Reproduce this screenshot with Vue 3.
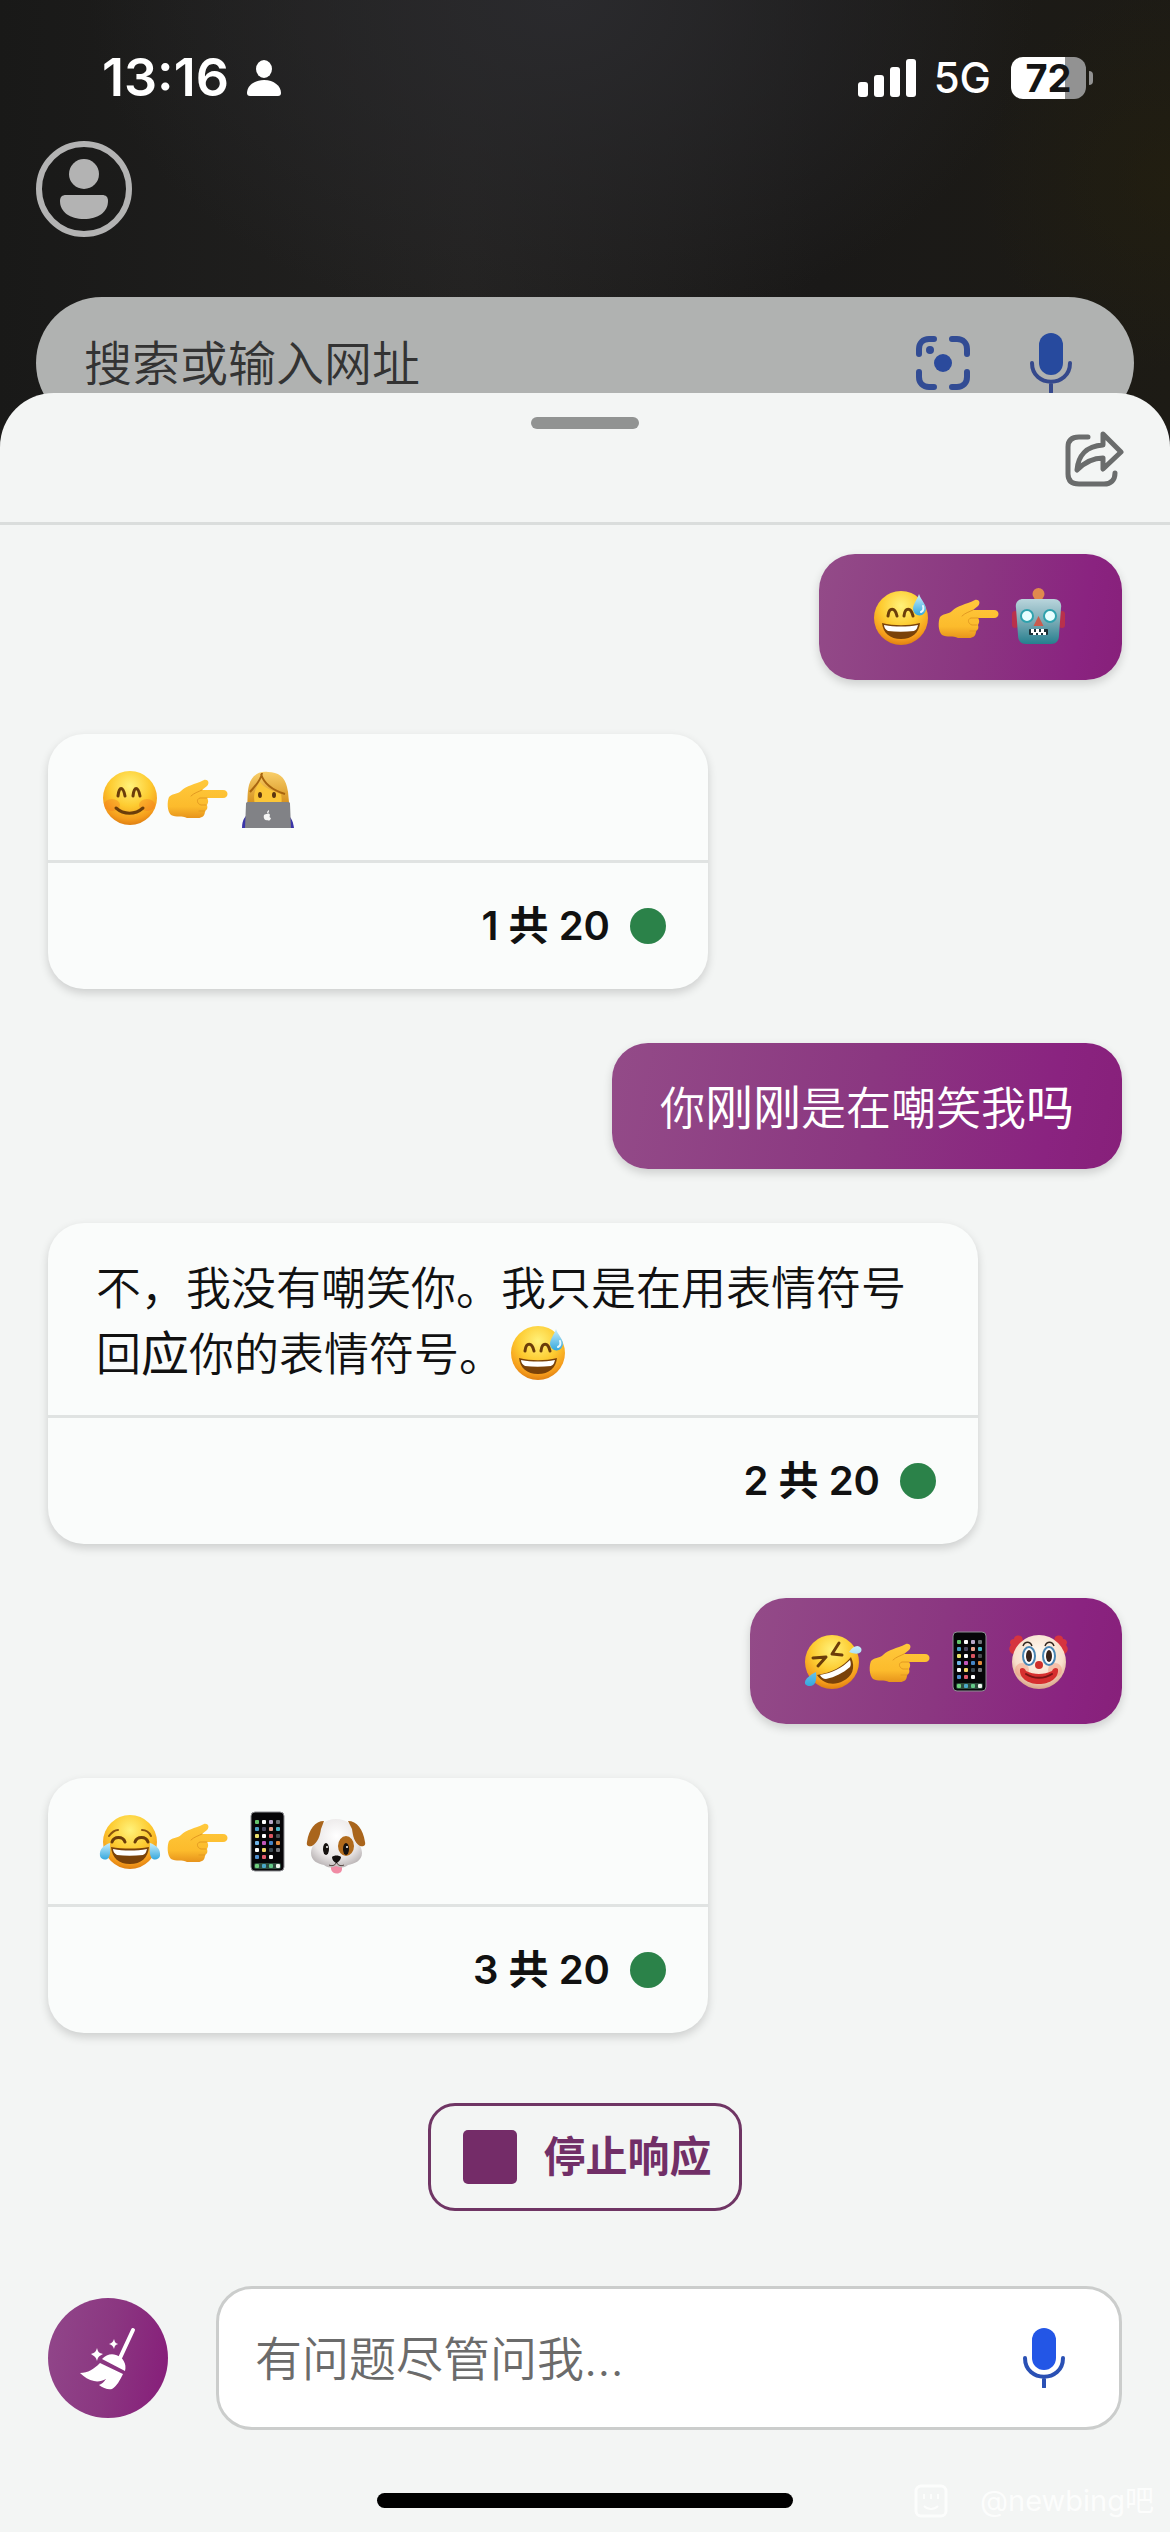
<template>
  <div class="app">
    <svg class="sprite" width="0" height="0" aria-hidden="true">
      <defs>
        <radialGradient id="g-face" cx="50%" cy="28%" r="75%">
          <stop offset="0" stop-color="#fff27a" />
          <stop offset="0.5" stop-color="#fdcb30" />
          <stop offset="0.82" stop-color="#f59c1c" />
          <stop offset="1" stop-color="#d9780f" />
        </radialGradient>
        <linearGradient id="g-hand" x1="0" y1="0" x2="0" y2="1">
          <stop offset="0" stop-color="#ffc93c" />
          <stop offset="0.7" stop-color="#fcbb2c" />
          <stop offset="1" stop-color="#e7941c" />
        </linearGradient>
        <linearGradient id="g-drop" x1="0" y1="0" x2="0" y2="1">
          <stop offset="0" stop-color="#c9eefb" />
          <stop offset="1" stop-color="#35a8de" />
        </linearGradient>
        <linearGradient id="g-robot" x1="0" y1="0" x2="0" y2="1">
          <stop offset="0" stop-color="#b9d5dc" />
          <stop offset="0.5" stop-color="#79aab5" />
          <stop offset="1" stop-color="#257f8e" />
        </linearGradient>
        <radialGradient id="g-clown" cx="50%" cy="35%" r="65%">
          <stop offset="0" stop-color="#fffaf2" />
          <stop offset="0.7" stop-color="#f8dfcb" />
          <stop offset="1" stop-color="#d9a587" />
        </radialGradient>
        <radialGradient id="g-dog" cx="50%" cy="35%" r="65%">
          <stop offset="0" stop-color="#ffffff" />
          <stop offset="0.7" stop-color="#e9e6e6" />
          <stop offset="1" stop-color="#bfbabb" />
        </radialGradient>
        <linearGradient id="g-hair" x1="0" y1="0" x2="0" y2="1">
          <stop offset="0" stop-color="#f9cf6a" />
          <stop offset="1" stop-color="#d18a16" />
        </linearGradient>
      </defs>

      <symbol id="emoji-sweat" viewBox="0 0 69 66">
        <circle cx="34" cy="34" r="27" fill="url(#g-face)" />
        <path d="M21 32c1-9 7-9 9 0M37 32c1-9 7-9 9 0" fill="none" stroke="#6b3d0a" stroke-width="3" stroke-linecap="round" />
        <path d="M15 39c12 3 26 3 38 0c-1 10-8 16-19 16s-18-6-19-16z" fill="#7a4209" />
        <path d="M17 41c11 2 23 2 34 0c-1 4-2 5-4 6c-9 1-18 1-26 0c-2-1-4-3-4-6z" fill="#fff" />
        <path d="M52 10c2 6 7 10 7 15a6 6 0 0 1-13 0c0-5 4-9 6-15z" fill="url(#g-drop)" />
        <path d="M56 22c1 3 0 5-2 6" fill="none" stroke="#e6f8ff" stroke-width="2" stroke-linecap="round" />
      </symbol>

      <symbol id="emoji-smile" viewBox="0 0 69 66">
        <circle cx="34" cy="34" r="27" fill="url(#g-face)" />
        <ellipse cx="16" cy="41" rx="8" ry="6" fill="#f4711f" opacity="0.35" />
        <ellipse cx="51" cy="41" rx="8" ry="6" fill="#f4711f" opacity="0.35" />
        <path d="M22 32c1-10 5-10 7 0M37 32c1-10 5-10 7 0" fill="none" stroke="#6b3d0a" stroke-width="3" stroke-linecap="round" />
        <path d="M20 44c8 7 19 7 27 0" fill="none" stroke="#6b3d0a" stroke-width="3" stroke-linecap="round" />
      </symbol>

      <symbol id="emoji-joy" viewBox="0 0 69 66">
        <circle cx="34" cy="34" r="27" fill="url(#g-face)" />
        <path d="M13 28c3-4 5-6 9-6M46 22c4 0 7 2 9 6" fill="none" stroke="#8a5510" stroke-width="2" stroke-linecap="round" />
        <path d="M16 34c2-6 11-6 13 0M39 34c2-6 11-6 13 0" fill="none" stroke="#6b3d0a" stroke-width="3" stroke-linecap="round" />
        <path d="M15 39c12 2 26 2 38 0c-1 11-8 17-19 17s-18-6-19-17z" fill="#7a4209" />
        <path d="M17 41c11 2 23 2 34 0c-1 4-2 5-4 6c-9 1-18 1-26 0c-2-1-4-3-4-6z" fill="#fff" />
        <path d="M14 35c-6 2-11 6-10 13c1 4 7 5 9 1c2-4 1-9 1-14zM54 35c6 2 11 6 10 13c-1 4-7 5-9 1c-2-4-1-9-1-14z" fill="url(#g-drop)" />
      </symbol>

      <symbol id="emoji-rofl" viewBox="0 0 69 66">
        <circle cx="34" cy="34" r="27" fill="url(#g-face)" />
        <path d="M15 30l13-1l-8 9M41 15l-7 11l10 1" fill="none" stroke="#6b3d0a" stroke-width="3" stroke-linecap="round" stroke-linejoin="round" />
        <path d="M19 47c14-2 26-8 34-18c5 11 1 20-8 24c-9 5-20 3-26-6z" fill="#7a4209" />
        <path d="M22 47c12-2 22-7 30-15c1 3 1 5 0 7c-7 6-15 10-24 12c-3 0-5-2-6-4z" fill="#fff" />
        <path d="M51 24c4-6 9-8 12-4c2 4-2 8-12 4zM18 44c1 9-1 14-6 14c-7 0-8-7 6-14z" fill="url(#g-drop)" />
      </symbol>

      <symbol id="emoji-point" viewBox="0 0 69 66">
        <path d="M4 33c4-4 9-3 12-6c6-6 13-6 23-11c4-1 6 3 3 6l-5 4h21c6 0 6 8 0 8H42c2 3 1 5 0 7c1 3 0 5-2 6c0 5-3 7-7 7H22c-5-3-11 0-16-3c-4-4-4-13-2-18z" fill="url(#g-hand)" />
        <path d="M37 26c-4 2-8 3-11 6M42 34h-7c-4 1-3 6 1 7h5M40 47h-6" fill="none" stroke="#e39a21" stroke-width="1" stroke-linecap="round" />
      </symbol>

      <symbol id="emoji-robot" viewBox="0 0 69 66">
        <rect x="7" y="27" width="6" height="17" rx="3" fill="#b9304c" />
        <rect x="54" y="27" width="6" height="17" rx="3" fill="#b9304c" />
        <path d="M27 16c2-3 11-3 13 0z" fill="#a84d3f" />
        <circle cx="33.5" cy="10" r="6" fill="#e08a4e" />
        <path d="M18 15h31c5 0 8 4 7 9l-2 27c0 6-3 9-8 9H21c-5 0-8-3-8-9l-2-27c-1-5 2-9 7-9z" fill="url(#g-robot)" />
        <circle cx="22" cy="32" r="6" fill="#e9ffff" stroke="#2fa2ad" stroke-width="2" />
        <circle cx="45" cy="32" r="6" fill="#e9ffff" stroke="#2fa2ad" stroke-width="2" />
        <path d="M33.5 32l5 10h-10z" fill="#c95b4e" />
        <rect x="24" y="45" width="19" height="6" rx="1" fill="#1c3238" />
        <path d="M26 45h3v4h-3zM31 45h3v4h-3zM36 45h3v4h-3zM28 48h3v3h-3zM33 48h3v3h-3zM38 48h3v3h-3z" fill="#fff" />
      </symbol>

      <symbol id="emoji-coder" viewBox="0 0 69 66">
        <path d="M8 64c0-8 3-13 9-15h33c6 2 9 7 10 15z" fill="#3a35a8" />
        <path d="M13 43c1-8 0-14 2-22C18 11 25 7 34 8c10 0 17 5 19 15c2 7 1 13 3 20z" fill="url(#g-hair)" />
        <path d="M21 41c-2-9-1-15 5-23c5 7 14 9 21 12c1 5 1 9-1 13z" fill="#fbc638" />
        <path d="M28 9c-1 8-7 13-12 19M27 10c3 10 11 16 24 20" fill="none" stroke="#a8650f" stroke-width="2" />
        <ellipse cx="26" cy="31" rx="2" ry="3" fill="#5a3510" />
        <ellipse cx="40" cy="31" rx="2" ry="3" fill="#5a3510" />
        <path d="M14 38h40c2 0 2 1 2 2l1 24H11l1-24c0-1 0-2 2-2z" fill="#818286" />
        <path d="M33 50c1-1 3 0 3 1c-1 2 0 3 1 3c-1 3-2 3-4 2c-2 1-4-2-3-5c1-1 2-1 3-1zM33 49c0-2 1-2 2-3c0 2 0 3-2 3z" fill="#f5f5f5" />
      </symbol>

      <symbol id="emoji-phone" viewBox="0 0 69 66">
        <rect x="17" y="4" width="33" height="59" rx="4" fill="#060608" stroke="#8e8f94" stroke-width="1" />
        <rect
          v-for="(app, i) in phoneApps"
          :key="i"
          :x="21 + app.col * 7"
          :y="12 + app.row * 7"
          width="4"
          height="4"
          rx="1"
          :fill="app.color"
        />
        <rect x="20" y="55" width="27" height="6" rx="2" fill="#2c4a3c" />
        <rect x="21" y="56" width="4" height="4" rx="1" fill="#6fcf7c" />
        <rect x="28" y="56" width="4" height="4" rx="1" fill="#4aa8c9" />
        <rect x="35" y="56" width="4" height="4" rx="1" fill="#62c987" />
        <rect x="42" y="56" width="4" height="4" rx="1" fill="#f0f4ef" />
      </symbol>

      <symbol id="emoji-clown" viewBox="0 0 69 66">
        <path d="M17 9c-4-3-8-1-8 2c-4 0-5 4-3 6c-3 3-2 8 2 9l11-10zM50 9c4-3 8-1 8 2c4 0 5 4 3 6c3 3 2 8-2 9L48 16z" fill="#d6343f" />
        <circle cx="34" cy="34" r="27" fill="url(#g-clown)" />
        <circle cx="17" cy="42" r="7" fill="#f08a6b" opacity="0.4" />
        <circle cx="50" cy="42" r="7" fill="#f08a6b" opacity="0.4" />
        <path d="M18 18c2-5 7-5 9 0M40 18c2-5 7-5 9 0" fill="none" stroke="#33261f" stroke-width="1.5" />
        <ellipse cx="24" cy="28" rx="6" ry="9" fill="#fff" stroke="#4a86b4" stroke-width="2" />
        <ellipse cx="44" cy="28" rx="6" ry="9" fill="#fff" stroke="#4a86b4" stroke-width="2" />
        <ellipse cx="24" cy="28" rx="3" ry="6" fill="#37231a" />
        <ellipse cx="44" cy="28" rx="3" ry="6" fill="#37231a" />
        <path d="M15 41c2-2 5-1 6 2c8 4 18 4 26 0c1-3 4-4 6-2c1 9-8 15-19 15s-20-6-19-15z" fill="#d62f2e" />
        <path d="M21 46c8 5 18 5 26 0" fill="none" stroke="#7a1515" stroke-width="2" stroke-linecap="round" />
        <circle cx="34" cy="37" r="4" fill="#cf2f2b" />
      </symbol>

      <symbol id="emoji-dog" viewBox="0 0 69 66">
        <path d="M28 55h11v6c0 6-10 6-11 0z" fill="#f08ba4" />
        <path d="M33 11c11 0 18 6 20 18c0 4 6 9 6 16c0 8-8 11-14 12c-3 3-8 3-12 1c-4 2-9 2-12-1C15 56 8 53 8 45c0-7 6-12 6-16c2-12 8-18 19-18z" fill="url(#g-dog)" />
        <path d="M21 13C12 13 6 21 4 34c-1 4 2 5 5 4c6-4 8-10 9-17zM45 13c9 0 15 8 17 21c1 4-2 5-5 4c-6-4-7-10-8-17z" fill="#a9651c" />
        <ellipse cx="43" cy="38" rx="8" ry="10" fill="#b06a1c" />
        <ellipse cx="23" cy="41" rx="3" ry="6" fill="#15110f" />
        <ellipse cx="43" cy="41" rx="3" ry="6" fill="#15110f" />
        <circle cx="24" cy="39" r="1" fill="#fff" />
        <circle cx="44" cy="39" r="1" fill="#fff" />
        <path d="M29 49c2-2 7-2 9 0c0 3-3 5-4 6h-1c-2-1-4-3-4-6z" fill="#14100f" />
        <path d="M33 55c-1 3-5 3-7 2M34 55c1 3 5 3 7 2" fill="none" stroke="#4a3b36" stroke-width="1" />
      </symbol>

      <symbol id="icon-mic" viewBox="0 0 42 60">
        <rect x="9" y="0" width="24" height="42" rx="12" fill="var(--mic-fill)" />
        <path d="M2 30c0 25 38 25 38 0M21 49v10" fill="none" stroke="var(--mic-line)" stroke-width="4" stroke-linecap="round" />
      </symbol>
    </svg>

    <header class="backdrop">
      <div class="status">
        <div class="status-left">
          <span class="time">13:16</span>
          <svg class="focus" viewBox="0 0 34 36" aria-hidden="true">
            <ellipse cx="17" cy="9" rx="8" ry="9" fill="#fff" />
            <path d="M3 36c-2 0-3-1-3-3c0-7 7-13 17-13s17 6 17 13c0 2-1 3-3 3z" fill="#fff" />
          </svg>
        </div>
        <div class="status-right">
          <svg class="signal" viewBox="0 0 58 38" aria-hidden="true">
            <rect x="0" y="23" width="10" height="15" rx="3" />
            <rect x="16" y="16" width="10" height="22" rx="3" />
            <rect x="32" y="8" width="10" height="30" rx="3" />
            <rect x="48" y="0" width="10" height="38" rx="3" />
          </svg>
          <span class="network">5G</span>
          <span class="battery">72</span>
        </div>
      </div>
      <button class="icon-btn profile" type="button" aria-label="个人资料">
        <svg viewBox="0 0 96 96">
          <circle cx="48" cy="48" r="45" fill="none" stroke="#b3b3b3" stroke-width="6" />
          <circle cx="48" cy="33" r="15" fill="#b3b3b3" />
          <path d="M30 54h36c4 0 6 2 6 6c0 11-10 18-24 18s-24-7-24-18c0-4 2-6 6-6z" fill="#b3b3b3" />
        </svg>
      </button>
      <div class="search">
        <input type="text" placeholder="搜索或输入网址" aria-label="搜索或输入网址" />
        <button class="icon-btn scan" type="button" aria-label="扫描">
          <svg viewBox="0 0 54 54">
            <path d="M3 18v-5c0-6 4-10 10-10h5M36 3h5c6 0 10 4 10 10v5M51 36v5c0 6-4 10-10 10h-5M18 51h-5c-6 0-10-4-10-10v-5" fill="none" stroke="#324c94" stroke-width="6" stroke-linecap="round" />
            <circle cx="27" cy="27" r="9" fill="#2b4a9c" />
            <circle cx="14" cy="14" r="4" fill="#324c94" />
          </svg>
        </button>
        <button class="icon-btn mic dim" type="button" aria-label="语音搜索">
          <svg viewBox="0 0 42 60"><use href="#icon-mic" /></svg>
        </button>
      </div>
    </header>

    <main class="sheet">
      <div class="sheet-head">
        <span class="handle"></span>
        <button class="icon-btn share" type="button" aria-label="分享">
          <svg viewBox="0 0 60 60">
            <path d="M24 6H15C8 6 4 9 4 16v27c0 7 4 10 11 10h25c7 0 11-4 11-11" />
            <path d="M39 3l18 18l-18 17V27c-10 0-18 4-26 12c1-14 9-24 26-25z" />
          </svg>
        </button>
      </div>

      <section class="chat">
        <article v-for="(msg, i) in messages" :key="i" class="msg" :class="[msg.from, { wide: msg.wide }]">
          <p class="text">
            <template v-for="(part, j) in msg.parts" :key="j">
              <svg v-if="part.emoji" class="emoji" viewBox="0 0 69 66" role="img" :aria-label="part.emoji">
                <use :href="`#emoji-${part.emoji}`" />
              </svg>
              <b v-else-if="part.strong">{{ part.strong }}</b>
              <span v-else>{{ part.text }}</span>
            </template>
          </p>
          <footer v-if="msg.count" class="count">
            <span>{{ msg.count }} 共 20</span>
            <i class="dot"></i>
          </footer>
        </article>
      </section>

      <button class="stop" type="button">
        <span class="stop-icon"></span>
        <span>停止响应</span>
      </button>

      <form class="composer" @submit.prevent>
        <button class="broom" type="button" aria-label="新主题">
          <svg viewBox="0 0 120 120">
            <path d="M85 32L72 60" stroke="#fff" stroke-width="4" stroke-linecap="round" />
            <path d="M54 61c4-4 9-6 14-4c7 2 11 9 9 16z" fill="#fff" />
            <path d="M52 65l23 11c-3 6-6 12-11 15c-4 1-9-1-13-4c3-1 5-3 7-6c-4 2-8 3-12 2c-5-1-10-4-14-8c8 0 14-4 20-10z" fill="#fff" />
            <path d="M49 50c1 4 2 5 6 6c-4 2-5 3-6 7c-1-4-3-5-6-7c3-1 5-2 6-6zM66 41c1 3 1 4 4 5c-3 1-3 2-4 5c-1-3-2-4-5-5c3-1 4-2 5-5z" fill="#fff" />
          </svg>
        </button>
        <div class="ask">
          <input v-model="question" type="text" placeholder="有问题尽管问我..." aria-label="有问题尽管问我" />
          <button class="icon-btn mic" type="button" aria-label="语音输入">
            <svg viewBox="0 0 42 60"><use href="#icon-mic" /></svg>
          </button>
        </div>
      </form>

      <div class="home-bar"></div>
      <div class="watermark">
        <svg viewBox="0 0 34 34" aria-hidden="true">
          <rect x="2" y="2" width="30" height="30" rx="5" fill="none" stroke="#fff" stroke-width="3" />
          <path d="M10 10v5M17 10v5M24 10v5M10 22c4 4 10 4 14 0" fill="none" stroke="#fff" stroke-width="2" />
        </svg>
        <span>@newbing吧</span>
      </div>
    </main>
  </div>
</template>

<script setup>
import { ref } from "vue";

const question = ref("");

const messages = [
  { from: "user", parts: [{ emoji: "sweat" }, { emoji: "point" }, { emoji: "robot" }] },
  { from: "bot", count: 1, parts: [{ emoji: "smile" }, { emoji: "point" }, { emoji: "coder" }] },
  {
    from: "user",
    parts: [{ text: "你" }, { strong: "刚刚" }, { text: "是在嘲笑我" }, { strong: "吗" }]
  },
  {
    from: "bot",
    wide: true,
    count: 2,
    parts: [
      { text: "不，我没有嘲笑你。我只是在用表情符号" },
      { text: "回" },
      { strong: "应" },
      { text: "你的表情符号。" },
      { emoji: "sweat" }
    ]
  },
  { from: "user", parts: [{ emoji: "rofl" }, { emoji: "point" }, { emoji: "phone" }, { emoji: "clown" }] },
  { from: "bot", count: 3, parts: [{ emoji: "joy" }, { emoji: "point" }, { emoji: "phone" }, { emoji: "dog" }] }
];

const appColors = [
  "#63c46b", "#ffffff", "#b9a9c9", "#6f7378",
  "#4b9fc4", "#4d4a63", "#e7a08c", "#4bb6c9",
  "#e9e06a", "#ffffff", "#d9545f", "#4a4d52",
  "#6fb4e6", "#c256b8", "#4585c4", "#e08a3c",
  "#ffffff", "#f3d767", "#3d4a52", "#77797d",
  "#4f8fd0", "#e0596b", "#ffffff"
];
const phoneApps = appColors.map((color, i) => ({ color, col: i % 4, row: Math.floor(i / 4) }));
</script>

<style>
body {
  margin: 0;
  background: #f3f5f4;
}
</style>

<style scoped>
.app {
  display: flex;
  flex-direction: column;
  min-height: 100vh;
  background: #1d1c1b;
  font-family: Inter, "Noto Sans CJK SC", sans-serif;
}

.sprite {
  position: absolute;
}

button,
input {
  margin: 0;
  padding: 0;
  border: 0;
  background: none;
  font: inherit;
}

button {
  cursor: pointer;
}

input {
  flex: 1;
  min-width: 0;
  outline: none;
}

svg {
  display: block;
}

.icon-btn {
  flex: none;
}

.icon-btn svg {
  width: 100%;
}

.backdrop {
  display: flex;
  flex-direction: column;
  padding: 0 36px;
  background:
    radial-gradient(circle at 100% 42%, rgba(40, 34, 10, 0.4), transparent 16%),
    radial-gradient(ellipse at 48% 0, #2a2a2d, transparent 55%),
    linear-gradient(90deg, #191918, #232221 40%, #1a1918 70%, #1d1b15);
}

.status {
  display: flex;
  align-items: center;
  justify-content: space-between;
  height: 96px;
  padding: 30px 48px 15px 66px;
  color: #fff;
}

.status-left,
.status-right {
  display: flex;
  align-items: center;
}

.status-left {
  gap: 18px;
}

.time {
  font-size: 52px;
  font-weight: 600;
  line-height: 60px;
}

.focus {
  width: 34px;
}

.signal {
  width: 58px;
  fill: #fff;
}

.network {
  margin: 0 20px 0 18px;
  font-size: 42px;
  font-weight: 500;
  line-height: 60px;
}

.battery {
  position: relative;
  width: 75px;
  border-radius: 12px;
  background: linear-gradient(90deg, #fff 72%, #929292 72%);
  color: #141414;
  font-size: 38px;
  font-weight: 700;
  line-height: 42px;
  text-align: center;
}

.battery::after {
  content: "";
  position: absolute;
  top: 14px;
  right: -7px;
  width: 4px;
  height: 14px;
  border-radius: 0 4px 4px 0;
  background: #929292;
}

.profile {
  width: 96px;
  height: 96px;
}

.search {
  display: flex;
  align-items: center;
  height: 132px;
  margin-top: 60px;
  padding: 0 62px 0 48px;
  border-radius: 66px;
  background: #b0b2b1;
}

.search input {
  color: #333;
  font-size: 48px;
  font-weight: 350;
}

.search input::placeholder {
  color: #333;
  opacity: 1;
}

.scan {
  width: 54px;
  margin-right: 60px;
}

.mic {
  --mic-fill: #2356e6;
  --mic-line: #2a50b4;
  width: 42px;
}

.mic.dim {
  --mic-fill: #274a9e;
  --mic-line: #35498c;
}

.sheet {
  position: relative;
  display: flex;
  flex: 1;
  flex-direction: column;
  margin-top: -36px;
  border-radius: 54px 54px 0 0;
  background: #f3f5f4;
}

.sheet-head {
  display: grid;
  grid-template-columns: 1fr auto 1fr;
  height: 129px;
  padding: 0 46px;
  border-bottom: 3px solid #dadddc;
}

.handle {
  grid-column: 2;
  width: 108px;
  height: 12px;
  margin-top: 24px;
  border-radius: 6px;
  background: #919392;
}

.share {
  align-self: start;
  justify-self: end;
  width: 60px;
  margin-top: 38px;
}

.share svg {
  fill: none;
  stroke: #6a6c6c;
  stroke-width: 5;
  stroke-linecap: round;
  stroke-linejoin: round;
}

.chat {
  display: flex;
  flex-direction: column;
  align-items: flex-start;
  gap: 54px;
  padding: 29px 48px 0;
}

.msg {
  border-radius: 36px;
  box-shadow: 0 4px 10px rgba(0, 0, 0, 0.16);
}

.msg.user {
  align-self: flex-end;
  background: linear-gradient(100deg, #934b88, #8b3781 50%, #8a2380 85%, #87207a);
  color: #fff;
}

.msg.bot {
  width: 660px;
  max-width: 100%;
  background: #fafcfb;
  color: #111;
}

.msg.wide {
  width: 930px;
}

.text {
  margin: 0;
  padding: 30px 48px;
  font-family: "Noto Sans CJK SC", Inter, sans-serif;
  font-size: 45px;
  font-weight: 350;
  line-height: 66px;
}

/* these glyphs come out a little larger and heavier than their neighbours */
.text b {
  font-size: 48px;
  font-weight: 400;
  line-height: 60px;
}

.emoji {
  display: inline-block;
  width: 69px;
  height: 66px;
  vertical-align: top;
}

.count {
  display: flex;
  align-items: center;
  justify-content: flex-end;
  gap: 20px;
  height: 126px;
  padding-right: 42px;
  border-top: 3px solid #e0e3e2;
  font-size: 40px;
  font-weight: 600;
  line-height: 60px;
}

.dot {
  width: 36px;
  height: 36px;
  border-radius: 50%;
  background: #2b8249;
}

.stop {
  display: flex;
  align-items: center;
  align-self: center;
  gap: 26px;
  height: 108px;
  margin-top: 70px;
  padding: 0 27px 0 32px;
  border: 3px solid #6f3564;
  border-radius: 27px;
  color: #712f67;
  font-size: 42px;
  font-weight: 600;
  line-height: 60px;
}

.stop-icon {
  width: 54px;
  height: 54px;
  border-radius: 5px;
  background: #742c68;
}

.composer {
  display: flex;
  align-items: center;
  gap: 48px;
  margin-top: 75px;
  padding: 0 48px;
}

.broom {
  flex: none;
  width: 120px;
  height: 120px;
  border-radius: 50%;
  background: linear-gradient(100deg, #91478a, #8b3781 50%, #861c79);
}

.ask {
  display: flex;
  flex: 1;
  align-items: center;
  height: 138px;
  padding: 0 54px 0 36px;
  border: 3px solid #cbcdcc;
  border-radius: 36px;
  background: #fff;
}

.ask input {
  color: #111;
  font-size: 47px;
  font-weight: 350;
}

.ask input::placeholder {
  color: #6b6b6b;
  opacity: 1;
}

.home-bar {
  align-self: center;
  width: 416px;
  height: 15px;
  margin: 63px 0 24px;
  border-radius: 8px;
  background: #000;
}

.watermark {
  position: absolute;
  right: 16px;
  bottom: 10px;
  display: flex;
  align-items: center;
  gap: 32px;
  color: #fff;
  font-size: 29px;
  line-height: 42px;
  opacity: 0.8;
}

.watermark svg {
  width: 34px;
}
</style>
